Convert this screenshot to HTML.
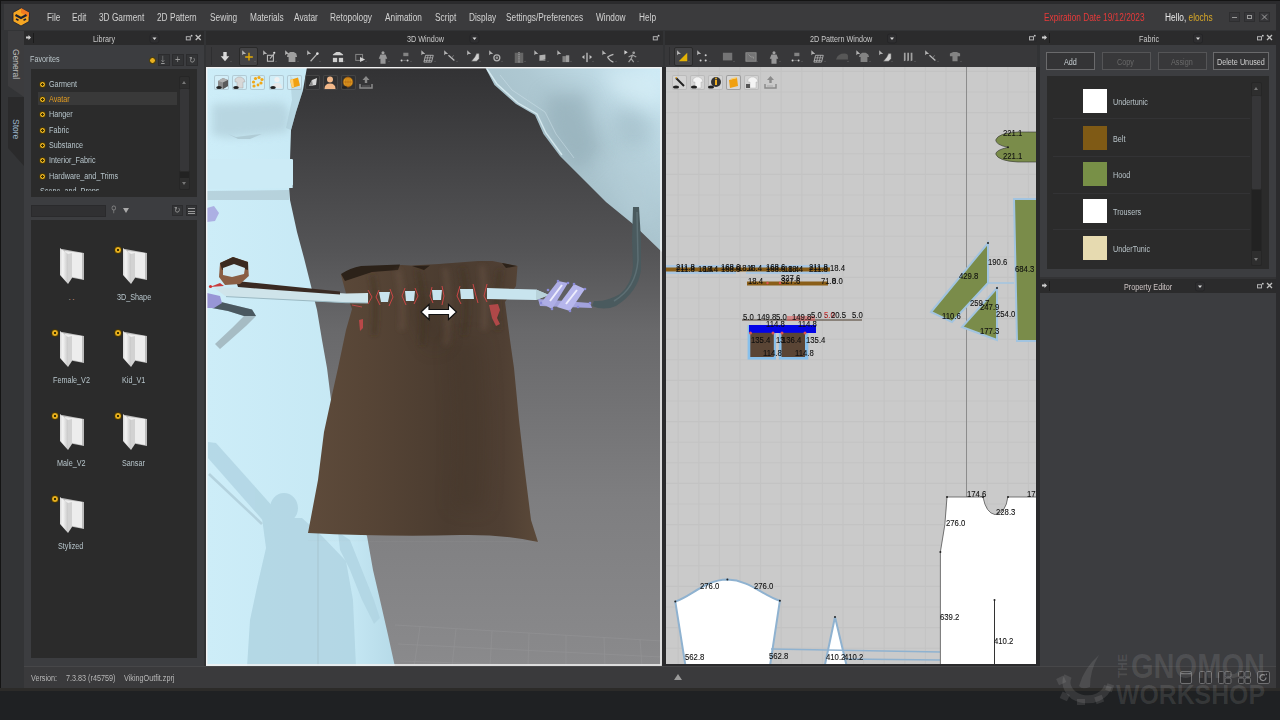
<!DOCTYPE html>
<html><head><meta charset='utf-8'>
<style>
*{margin:0;padding:0;box-sizing:border-box}
html,body{width:1280px;height:720px;overflow:hidden;background:#1e2022;font-family:"Liberation Sans",sans-serif;position:relative}
.a{position:absolute}
.t{position:absolute;white-space:nowrap;font-size:8.5px;color:#c8c8c8;line-height:10px;transform:scaleX(.85);transform-origin:0 0}
.m{position:absolute;white-space:nowrap;font-size:10px;color:#d2d2d2;line-height:12px;top:12px;transform:scaleX(.83);transform-origin:0 0}
.ph{position:absolute;background:#2b2b2c;height:14px}
.ib{position:absolute;width:15px;height:15px;border:1px solid rgba(140,160,170,.45);border-radius:2px;background:rgba(255,255,255,.12)}
.pt{position:absolute;white-space:nowrap;font-size:9px;color:#000;line-height:9px;transform:scaleX(.86);transform-origin:0 0;-webkit-text-stroke:.1px #000}
</style>
</head><body>
<div class="a" style="left:0;top:0;width:1280px;height:691px;background:#323335"></div>
<div class="a" style="left:0;top:0;width:1280px;height:1px;background:#141414"></div>
<div class="a" style="left:0;top:0;width:1px;height:691px;background:#141414"></div>
<div class="a" style="left:1px;top:1px;width:1279px;height:3px;background:#2b2b2d"></div>
<div class="a" style="left:4px;top:4px;width:1272px;height:26px;background:#3b3b3d"></div>
<div class="a" style="left:1276px;top:1px;width:4px;height:690px;background:#2b2b2d"></div>
<!-- logo -->
<svg class="a" style="left:11px;top:7px" width="20" height="20" viewBox="0 0 20 20">
<polygon points="10,1 18,5.5 18,14.5 10,19 2,14.5 2,5.5" fill="#f5a623" stroke="#1a2030" stroke-width="0.8"/>
<polygon points="10,1 18,5.5 18,10 10,6" fill="#f07a20"/>
<polyline points="4.5,8 10,11 15.5,8" fill="none" stroke="#1e2230" stroke-width="2.2"/>
<line x1="5" y1="12" x2="7.5" y2="13.3" stroke="#1e2230" stroke-width="1.6"/>
<line x1="15" y1="12" x2="12.5" y2="13.3" stroke="#1e2230" stroke-width="1.6"/>
</svg>
<div class="m" style="left:47px">File</div>
<div class="m" style="left:72px">Edit</div>
<div class="m" style="left:99px">3D Garment</div>
<div class="m" style="left:156.5px">2D Pattern</div>
<div class="m" style="left:209.5px">Sewing</div>
<div class="m" style="left:249.5px">Materials</div>
<div class="m" style="left:293.5px">Avatar</div>
<div class="m" style="left:330px">Retopology</div>
<div class="m" style="left:385px">Animation</div>
<div class="m" style="left:434.5px">Script</div>
<div class="m" style="left:468.5px">Display</div>
<div class="m" style="left:505.5px">Settings/Preferences</div>
<div class="m" style="left:595.5px">Window</div>
<div class="m" style="left:639px">Help</div>
<div class="m" style="left:1044px;color:#e83a3a">Expiration Date 19/12/2023</div>
<div class="m" style="left:1165px;color:#e8e8e8">Hello, <span style="color:#d9a928">elochs</span></div>
<div class="a" style="left:1229px;top:12px;width:11px;height:10px;background:#37373a;border:1px solid #2e2e30"></div>
<div class="a" style="left:1232px;top:17px;width:5px;height:1px;background:#9a9a9a"></div>
<div class="a" style="left:1244px;top:12px;width:11px;height:10px;background:#37373a;border:1px solid #2e2e30"></div>
<div class="a" style="left:1247px;top:15px;width:5px;height:4px;border:1px solid #9a9a9a"></div>
<div class="a" style="left:1259px;top:12px;width:11px;height:10px;background:#37373a;border:1px solid #2e2e30"></div><svg class="a" style="left:1261px;top:14px" width="7" height="6"><path d="M1 0.5 L6 5.5 M6 0.5 L1 5.5" stroke="#a0a0a0" stroke-width="1"/></svg>
<!-- left tabs -->
<div class="a" style="left:1px;top:30px;width:23px;height:661px;background:#333436"></div>
<svg class="a" style="left:0;top:30px" width="24" height="160"><polygon points="8,1 24,1 24,67 8,56" fill="#3c3c3e"/><polygon points="8,67 24,67 24,136 8,118" fill="#2a2a2b"/></svg>
<div class="a" style="left:12px;top:49px;transform:rotate(90deg);transform-origin:0 0;"><div class="t" style="left:0;top:-9px;position:relative;color:#bcbcbc;transform:none">General</div></div>
<div class="a" style="left:12px;top:119px;transform:rotate(90deg);transform-origin:0 0;"><div class="t" style="left:0;top:-9px;position:relative;color:#9cb6cc;transform:none">Store</div></div>

<div class="a" style="left:24px;top:31px;width:180px;height:636px;background:#3c3d40"></div>
<div class="ph" style="left:24px;top:31px;width:180px;"></div>
<div class="a" style="left:26px;top:35px;width:5px;height:5px;background:#cfcfcf;clip-path:polygon(0 30%,50% 30%,50% 0,100% 50%,50% 100%,50% 70%,0 70%)"></div>
<div class="a" style="left:33px;top:33px;width:1px;height:10px;background:#1c1c1c"></div>
<div class="t" style="left:93px;top:34px;color:#c9c9c9">Library</div>
<!-- favorites -->
<div class="t" style="left:30px;top:54px;color:#b9c4c8">Favorites</div>
<div class="a" style="left:149px;top:57px;width:7px;height:7px;border-radius:50%;background:#e8b020;border:1.5px solid #3a3000"></div>
<div class="a" style="left:158px;top:54px;width:12px;height:12px;background:#333436;border:1px solid #2c2c2e"></div>
<div class="a" style="left:172px;top:54px;width:12px;height:12px;background:#333436;border:1px solid #2c2c2e"></div>
<div class="a" style="left:186px;top:54px;width:12px;height:12px;background:#333436;border:1px solid #2c2c2e"></div>
<div class="t" style="left:161px;top:55px;color:#999;font-size:10px">&#x2913;</div>
<div class="t" style="left:175px;top:54px;color:#999;font-size:11px">+</div>
<div class="t" style="left:189px;top:55px;color:#999;font-size:9px">&#x21bb;</div>
<div class="a" style="left:31px;top:69px;width:166px;height:128px;background:#2b2b2b"></div>
<div class="a" style="left:38px;top:92px;width:139px;height:13px;background:#393939"></div>
<div class="a" style="left:179px;top:76px;width:11px;height:114px;background:#2e2e2e;border:1px solid #262626;border-radius:2px"></div>
<div class="a" style="left:179px;top:88px;width:11px;height:84px;background:#363638;border:1px solid #2a2a2a;border-radius:2px"></div><div class="a" style="left:180px;top:172px;width:9px;height:6px;background:#222"></div>
<div class="a" style="left:182px;top:81px;width:0;height:0;border-left:2.5px solid transparent;border-right:2.5px solid transparent;border-bottom:3px solid #777"></div>
<div class="a" style="left:182px;top:182px;width:0;height:0;border-left:2.5px solid transparent;border-right:2.5px solid transparent;border-top:3px solid #777"></div>
<div class="a" style="left:39px;top:81px;width:7px;height:7px;border-radius:50%;background:radial-gradient(circle,#3a3000 0 1.2px,#e8b020 1.4px);border:1.5px solid #4a3800"></div>
<div class="t" style="left:49px;top:79px;color:#b8c6cc">Garment</div>
<div class="a" style="left:39px;top:96px;width:7px;height:7px;border-radius:50%;background:radial-gradient(circle,#3a3000 0 1.2px,#e8b020 1.4px);border:1.5px solid #4a3800"></div>
<div class="t" style="left:49px;top:94px;color:#e09a20">Avatar</div>
<div class="a" style="left:39px;top:111px;width:7px;height:7px;border-radius:50%;background:radial-gradient(circle,#3a3000 0 1.2px,#e8b020 1.4px);border:1.5px solid #4a3800"></div>
<div class="t" style="left:49px;top:109px;color:#b8c6cc">Hanger</div>
<div class="a" style="left:39px;top:127px;width:7px;height:7px;border-radius:50%;background:radial-gradient(circle,#3a3000 0 1.2px,#e8b020 1.4px);border:1.5px solid #4a3800"></div>
<div class="t" style="left:49px;top:125px;color:#b8c6cc">Fabric</div>
<div class="a" style="left:39px;top:142px;width:7px;height:7px;border-radius:50%;background:radial-gradient(circle,#3a3000 0 1.2px,#e8b020 1.4px);border:1.5px solid #4a3800"></div>
<div class="t" style="left:49px;top:140px;color:#b8c6cc">Substance</div>
<div class="a" style="left:39px;top:157px;width:7px;height:7px;border-radius:50%;background:radial-gradient(circle,#3a3000 0 1.2px,#e8b020 1.4px);border:1.5px solid #4a3800"></div>
<div class="t" style="left:49px;top:155px;color:#b8c6cc">Interior_Fabric</div>
<div class="a" style="left:39px;top:173px;width:7px;height:7px;border-radius:50%;background:radial-gradient(circle,#3a3000 0 1.2px,#e8b020 1.4px);border:1.5px solid #4a3800"></div>
<div class="t" style="left:49px;top:171px;color:#b8c6cc">Hardware_and_Trims</div>
<div class="a" style="left:31px;top:186px;width:140px;height:5px;overflow:hidden"><div class="t" style="left:9px;top:0px;color:#b8c6cc">Scene_and_Props</div></div>
<div class="a" style="left:31px;top:205px;width:75px;height:12px;background:#303032;border:1px solid #2a2a2c"></div>
<div class="t" style="left:111px;top:204px;color:#8a8a8a;font-size:9px">&#x26b2;</div>
<div class="a" style="left:123px;top:208px;width:0;height:0;border-left:3px solid transparent;border-right:3px solid transparent;border-top:5px solid #aaa"></div>
<div class="a" style="left:172px;top:205px;width:11px;height:11px;background:#333436;border:1px solid #2c2c2e"></div>
<div class="a" style="left:186px;top:205px;width:11px;height:11px;background:#333436;border:1px solid #2c2c2e"></div>
<div class="t" style="left:174px;top:205px;color:#999;font-size:9px">&#x21bb;</div>
<div class="a" style="left:188px;top:208px;width:7px;height:6px;border-top:1px solid #999;border-bottom:1px solid #999;background:linear-gradient(#999,#999) 0 2px/7px 1px no-repeat"></div>
<div class="a" style="left:31px;top:220px;width:166px;height:438px;background:#2b2b2b"></div>
<svg class="a" style="left:59px;top:247px" width="26" height="38" viewBox="0 0 26 38">
<defs><linearGradient id="fg" x1="0" x2="1"><stop offset="0" stop-color="#d8d8d8"/><stop offset=".35" stop-color="#f4f4f4"/><stop offset="1" stop-color="#c8c8c8"/></linearGradient></defs>
<polygon points="3,2 25,6 25,33 9,30" fill="#bdbdbd"/>
<polygon points="6,4 23,6 23,32 9,29" fill="#ededed"/>
<polygon points="1,1 9,7 9,37 1,28" fill="url(#fg)"/>
<polygon points="9,7 13,6 13,31 9,37" fill="#d2d2d2"/>
</svg>
<div class="t" style="left:68.5px;top:292px;color:#c09080;letter-spacing:1.5px;transform:none">..</div>
<svg class="a" style="left:122px;top:247px" width="26" height="38" viewBox="0 0 26 38">
<defs><linearGradient id="fg" x1="0" x2="1"><stop offset="0" stop-color="#d8d8d8"/><stop offset=".35" stop-color="#f4f4f4"/><stop offset="1" stop-color="#c8c8c8"/></linearGradient></defs>
<polygon points="3,2 25,6 25,33 9,30" fill="#bdbdbd"/>
<polygon points="6,4 23,6 23,32 9,29" fill="#ededed"/>
<polygon points="1,1 9,7 9,37 1,28" fill="url(#fg)"/>
<polygon points="9,7 13,6 13,31 9,37" fill="#d2d2d2"/>
</svg>
<div class="a" style="left:114px;top:246px;width:8px;height:8px;border-radius:50%;background:radial-gradient(circle,#3a3000 0 1.2px,#e8b020 1.4px);border:1.5px solid #4a3800"></div>
<div class="t" style="left:117.0px;top:292px;color:#b8c6cc">3D_Shape</div>
<svg class="a" style="left:59px;top:330px" width="26" height="38" viewBox="0 0 26 38">
<defs><linearGradient id="fg" x1="0" x2="1"><stop offset="0" stop-color="#d8d8d8"/><stop offset=".35" stop-color="#f4f4f4"/><stop offset="1" stop-color="#c8c8c8"/></linearGradient></defs>
<polygon points="3,2 25,6 25,33 9,30" fill="#bdbdbd"/>
<polygon points="6,4 23,6 23,32 9,29" fill="#ededed"/>
<polygon points="1,1 9,7 9,37 1,28" fill="url(#fg)"/>
<polygon points="9,7 13,6 13,31 9,37" fill="#d2d2d2"/>
</svg>
<div class="a" style="left:51px;top:329px;width:8px;height:8px;border-radius:50%;background:radial-gradient(circle,#3a3000 0 1.2px,#e8b020 1.4px);border:1.5px solid #4a3800"></div>
<div class="t" style="left:52.5px;top:375px;color:#b8c6cc">Female_V2</div>
<svg class="a" style="left:122px;top:330px" width="26" height="38" viewBox="0 0 26 38">
<defs><linearGradient id="fg" x1="0" x2="1"><stop offset="0" stop-color="#d8d8d8"/><stop offset=".35" stop-color="#f4f4f4"/><stop offset="1" stop-color="#c8c8c8"/></linearGradient></defs>
<polygon points="3,2 25,6 25,33 9,30" fill="#bdbdbd"/>
<polygon points="6,4 23,6 23,32 9,29" fill="#ededed"/>
<polygon points="1,1 9,7 9,37 1,28" fill="url(#fg)"/>
<polygon points="9,7 13,6 13,31 9,37" fill="#d2d2d2"/>
</svg>
<div class="a" style="left:114px;top:329px;width:8px;height:8px;border-radius:50%;background:radial-gradient(circle,#3a3000 0 1.2px,#e8b020 1.4px);border:1.5px solid #4a3800"></div>
<div class="t" style="left:122.0px;top:375px;color:#b8c6cc">Kid_V1</div>
<svg class="a" style="left:59px;top:413px" width="26" height="38" viewBox="0 0 26 38">
<defs><linearGradient id="fg" x1="0" x2="1"><stop offset="0" stop-color="#d8d8d8"/><stop offset=".35" stop-color="#f4f4f4"/><stop offset="1" stop-color="#c8c8c8"/></linearGradient></defs>
<polygon points="3,2 25,6 25,33 9,30" fill="#bdbdbd"/>
<polygon points="6,4 23,6 23,32 9,29" fill="#ededed"/>
<polygon points="1,1 9,7 9,37 1,28" fill="url(#fg)"/>
<polygon points="9,7 13,6 13,31 9,37" fill="#d2d2d2"/>
</svg>
<div class="a" style="left:51px;top:412px;width:8px;height:8px;border-radius:50%;background:radial-gradient(circle,#3a3000 0 1.2px,#e8b020 1.4px);border:1.5px solid #4a3800"></div>
<div class="t" style="left:56.5px;top:458px;color:#b8c6cc">Male_V2</div>
<svg class="a" style="left:122px;top:413px" width="26" height="38" viewBox="0 0 26 38">
<defs><linearGradient id="fg" x1="0" x2="1"><stop offset="0" stop-color="#d8d8d8"/><stop offset=".35" stop-color="#f4f4f4"/><stop offset="1" stop-color="#c8c8c8"/></linearGradient></defs>
<polygon points="3,2 25,6 25,33 9,30" fill="#bdbdbd"/>
<polygon points="6,4 23,6 23,32 9,29" fill="#ededed"/>
<polygon points="1,1 9,7 9,37 1,28" fill="url(#fg)"/>
<polygon points="9,7 13,6 13,31 9,37" fill="#d2d2d2"/>
</svg>
<div class="a" style="left:114px;top:412px;width:8px;height:8px;border-radius:50%;background:radial-gradient(circle,#3a3000 0 1.2px,#e8b020 1.4px);border:1.5px solid #4a3800"></div>
<div class="t" style="left:121.5px;top:458px;color:#b8c6cc">Sansar</div>
<svg class="a" style="left:59px;top:496px" width="26" height="38" viewBox="0 0 26 38">
<defs><linearGradient id="fg" x1="0" x2="1"><stop offset="0" stop-color="#d8d8d8"/><stop offset=".35" stop-color="#f4f4f4"/><stop offset="1" stop-color="#c8c8c8"/></linearGradient></defs>
<polygon points="3,2 25,6 25,33 9,30" fill="#bdbdbd"/>
<polygon points="6,4 23,6 23,32 9,29" fill="#ededed"/>
<polygon points="1,1 9,7 9,37 1,28" fill="url(#fg)"/>
<polygon points="9,7 13,6 13,31 9,37" fill="#d2d2d2"/>
</svg>
<div class="a" style="left:51px;top:495px;width:8px;height:8px;border-radius:50%;background:radial-gradient(circle,#3a3000 0 1.2px,#e8b020 1.4px);border:1.5px solid #4a3800"></div>
<div class="t" style="left:58.0px;top:541px;color:#b8c6cc">Stylized</div>

<div class="ph" style="left:206px;top:31px;width:457px;"></div>
<div class="t" style="left:407px;top:34px;color:#c9c9c9">3D Window</div>
<div class="a" style="left:206px;top:45px;width:457px;height:22px;background:#38383a"></div>
<div class="a" style="left:211px;top:47px;width:1px;height:18px;background:#2e2e30"></div>
<div class="a" style="left:239px;top:47px;width:19px;height:19px;background:#444446;border:1px solid #2a2a2a;border-radius:2px"></div>
<svg class="a" style="left:206px;top:67px" width="457" height="600" viewBox="206 67 457 600">
<defs>
<linearGradient id="bg3" x1="0" y1="0" x2="0" y2="1">
<stop offset="0" stop-color="#323234"/><stop offset=".305" stop-color="#545456"/><stop offset=".44" stop-color="#69696b"/><stop offset=".72" stop-color="#7e7e80"/><stop offset="1" stop-color="#8a8a8c"/></linearGradient>
<linearGradient id="fig" x1="0" y1="0" x2="1" y2="0">
<stop offset="0" stop-color="#cdedf8"/><stop offset=".75" stop-color="#c6e8f4"/><stop offset="1" stop-color="#b6dae8"/></linearGradient>
<linearGradient id="slv" x1="1" y1="0" x2="0" y2="1">
<stop offset="0" stop-color="#cdeaf6"/><stop offset=".4" stop-color="#aec8d2"/><stop offset="1" stop-color="#9ab3bc"/></linearGradient>
<linearGradient id="bag" x1="0" y1="0" x2="1" y2="0">
<stop offset="0" stop-color="#5e4b3b"/><stop offset=".25" stop-color="#574536"/><stop offset=".6" stop-color="#4b3c30"/><stop offset=".85" stop-color="#4f3f33"/><stop offset="1" stop-color="#5b4939"/></linearGradient>
<linearGradient id="bagv" x1="0" y1="0" x2="0" y2="1">
<stop offset="0" stop-color="#000" stop-opacity="0"/><stop offset=".8" stop-color="#000" stop-opacity="0"/><stop offset="1" stop-color="#fff" stop-opacity=".06"/></linearGradient>
<filter id="bl2" filterUnits="userSpaceOnUse" x="206" y="67" width="457" height="600"><feGaussianBlur stdDeviation="2.5"/></filter><filter id="bl4" filterUnits="userSpaceOnUse" x="206" y="67" width="457" height="600"><feGaussianBlur stdDeviation="4"/></filter><filter id="bl6" filterUnits="userSpaceOnUse" x="206" y="67" width="457" height="600"><feGaussianBlur stdDeviation="9"/></filter>
<clipPath id="slvclip"><path d="M485 67 L662 67 L662 252 L633 224 L606 202 L587 183 L560 156 L543.5 134 L535 115 L516 104 L494.5 85 Z"/></clipPath>
<clipPath id="figclip"><path d="M206 67 L307 67 L303 90 L296 112 L291 130 L290 160 L293 160 L293 185 L289 186 L290 200 L297 232 L304 258 L310.5 284 L317 310 L322 340 L327 368 L331 400 L334 432 L338 470 L350 505 L367 536 L373 570 L380 600 L388 635 L395 667 L206 667 Z"/></clipPath>
</defs>
<rect x="206" y="67" width="457" height="600" fill="url(#bg3)"/>
<g stroke="#a0a0a2" stroke-width="0.8" fill="none" opacity=".35">
<path d="M395 625 L662 641 M398 644 L662 657 M400 661 L662 670"/>
<path d="M420 627 L414 667 M456 629 L452 667 M492 631 L490 667 M529 633 L528 667 M566 635 L566 667 M604 637 L605 667 M640 639 L642 667"/>
</g>
<!-- right sleeve -->
<path d="M485 67 L662 67 L662 252 L633 224 L606 202 L587 183 L560 156 L543.5 134 L535 115 L516 104 L494.5 85 Z" fill="url(#slv)"/>
<g clip-path="url(#slvclip)"><path d="M545 95 L585 92 L600 150 L575 175 L548 130 Z" fill="#8aa4ae" opacity=".5" filter="url(#bl6)"/><path d="M625 103 L648 118 L655 135 L632 150 L612 128 Z" fill="#8aa4ae" opacity=".3" filter="url(#bl6)"/><path d="M600 160 L640 150 L660 180 L655 230 L625 215 Z" fill="#b8d2dc" opacity=".4" filter="url(#bl6)"/>
<path d="M600 70 L662 70 L662 110 L620 100 Z" fill="#def4fb" opacity=".5" filter="url(#bl6)"/>
</g><path d="M487 69 L497 84 L518 103 L537 114 L546 133 L562 155" stroke="#e2f4fa" stroke-width="1.4" fill="none" opacity=".75"/>
<path d="M500 75 L512 90 L530 102 L545 112 L556 134 L574 158" stroke="#cfe4ec" stroke-width="1" fill="none" opacity=".5"/>
<!-- cord -->
<path d="M633 207 L639 207 L641 240 L641 270 Q638 292 616 306 Q604 311 592 306 L594 301 Q606 302 620 294 Q632 284 633 266 L632 240 Z" fill="#4a5a5e"/>
<path d="M637 212 L638 260 Q636 288 614 301" stroke="#5d6f74" stroke-width="1.5" fill="none"/>
<!-- left figure -->
<path d="M206 67 L307 67 L303 90 L296 112 L291 130 L290 160 L293 160 L293 185 L289 186 L290 200 L297 232 L304 258 L310.5 284 L317 310 L322 340 L327 368 L331 400 L334 432 L338 470 L350 505 L367 536 L373 570 L380 600 L388 635 L395 667 L206 667 Z" fill="url(#fig)"/>
<g clip-path="url(#figclip)"><path d="M212 104 L282 102 L290 112 L288 132 L250 136 L228 138 L212 135 Z" fill="#aecbd6" opacity=".65" filter="url(#bl4)"/></g><path d="M228 134 L236 137 L244 136 L252 135 L262 134 L250 139 L238 139 Z" fill="#b0ccd6"/>
<path d="M290 75 L303 90 L296 112 L291 130 L286 128 L292 100 Z" fill="#a8c6d2" opacity=".5"/>
<path d="M206 159 L292.7 159 L292.7 188 L206 189 Z" fill="#ccebf6"/>
<path d="M206 191 L289 190 L289 200 L206 200 Z" fill="#b2ccd6" opacity=".8"/>
<!-- shadow silhouette -->
<g fill="#b2d6e4" opacity=".9">
<path d="M208 442 L216 443 L274 508 L276 522 L266 524 L208 458 Z"/>
<ellipse cx="284" cy="508" rx="14" ry="15"/>
<path d="M262 518 L302 518 L322 536 L346 561 L353 600 L356 667 L247 667 L250 620 L257 587 L266 548 Z"/>
<path d="M338 532 L350 540 L362 570 L374 600 L380 618 L374 624 L362 600 L350 570 L340 550 Z"/>
</g>
<path d="M209 474 L262 524" stroke="#b4d2de" stroke-width="2.5" fill="none"/>
<path d="M318 532 L318 667" stroke="#a6c4d0" stroke-width="1.2" fill="none" opacity=".8"/>
<polygon points="207,208 214,206 219,213 215,221 207,222" fill="#a9a8e0" opacity=".9"/>
<!-- bag -->
<path d="M341 275 Q350 268 361 267 L402 265 L411 265.5 L439 264 L478 261 L492.5 261 L517.5 266 L516 286 L505 302 L510 340 L514 368 L519 420 L524 464 L531 520 L538 542 Q500 534 460 535 Q390 537 308 533 L318 480 L324 432 L332 395 L338 368 L346 330 L352 309 L345.6 292 Z" fill="url(#bag)"/>
<path d="M341 274 Q350 268 361 266 L400 264.5 L398 270 L372 272 L345 281 Z" fill="#2c2219"/>
<path d="M412 266 L430 265.5 L424 270 Z M502 263 L517 266 L506 268 Z" fill="#2c2219"/>
<g filter="url(#bl2)"><path d="M372 275 Q378 300 374 335 M418 270 Q426 300 422 345 M462 268 Q470 300 464 335 M500 270 Q494 300 498 330" stroke="#3e3026" stroke-width="5" fill="none" opacity=".5"/>
<path d="M398 270 Q404 300 402 330 M445 268 Q450 300 446 345 M482 266 Q486 300 484 330" stroke="#6e5848" stroke-width="6" fill="none" opacity=".4"/>
</g><path d="M465 340 Q475 420 468 510" stroke="#3a2d24" stroke-width="34" fill="none" opacity=".2" filter="url(#bl6)"/><path d="M420 300 Q430 330 440 345" stroke="#3a2d24" stroke-width="20" fill="none" opacity=".35" filter="url(#bl6)"/>
<rect x="308" y="530" width="231" height="12" fill="url(#bagv)"/>
<!-- strap -->
<path d="M213.6 287.4 L252 288 L346 293.5 L368 293 L368 303 L346 302.7 L226 296.6 Z" fill="#cfe4ea"/>
<path d="M226 296.6 L346 302.7 L368 303" stroke="#9ab8c2" stroke-width="1" fill="none"/>
<g fill="#c8e4ee">
<path d="M379 292 L390 292 L388 302 L381 302 Z"/>
<path d="M405 291 L415 291 L414 301 L406 301 Z"/>
<path d="M432 290 L442 290 L441 300 L433 300 Z"/>
<path d="M460 289 L473 289 L474 299 L461 299 Z"/>
<path d="M487 288 L536 289.5 L549 295 L536 300 L487 299 Z"/>
</g>
<path d="M536 289.5 L549 295 L536 300 Z" fill="#b8d2da"/>
<g stroke="#cc4646" stroke-width="1" fill="none">
<path d="M368 290 L372 297 L368 304 M379 290 L376 297 L380 305 M390 289 L393 297 L389 306 M405 288 L402 296 L406 305 M415 288 L418 296 L414 304 M432 287 L430 296 L433 303 M442 286 L444 296 L442 305 M460 286 L457 296 L461 304 M473 284 L476 296 L478 303 M487 284 L484 296 L487 302"/>
</g>
<path d="M489 305 L498 304 L500 310 L497 318 L500 324 L496 326 L492 318 Z" fill="#b04848"/>
<path d="M359 320 L363 319 L363 328 L360 331 Z" fill="#b84848"/>
<path d="M352 305 L362 307" stroke="#b84848" stroke-width="1"/>
<path d="M236 281 L276 285 L340 291.5 L340 294.5 L276 290 L238 287 Z" fill="#3a2a22"/>
<!-- buckle -->
<path d="M538 299 L590 303 L592 308 L540 306 Z" fill="#a2a2dc"/>
<path d="M541 303 L558 281 L568 283 L552 309 Z" fill="#aeaee6"/>
<path d="M557 307 L574 284 L585 289 L570 311 Z" fill="#b6b6ec"/>
<path d="M550 301 L562 285 M566 304 L577 290" stroke="#ececfc" stroke-width="2"/>
<g fill="#8a8ad8"><circle cx="541" cy="303" r="1.3"/><circle cx="558" cy="281" r="1.3"/><circle cx="568" cy="283" r="1.3"/><circle cx="552" cy="309" r="1.3"/><circle cx="574" cy="284" r="1.3"/><circle cx="585" cy="289" r="1.3"/><circle cx="570" cy="311" r="1.3"/><circle cx="590" cy="303" r="1.3"/><circle cx="578" cy="307" r="1.3"/><circle cx="548" cy="290" r="1.3"/></g>
<!-- belt loop left -->
<path d="M220 263 L233 257 L248 262 L248.8 276 L240 284 L225 285 L219 277 Z" fill="#8a5e44"/>
<path d="M220 263 L233 257 L248 262 L248 270 L234 266 L222 270 Z" fill="#3a2a20"/>
<path d="M223 268 L234 264 L245 268 L244 274 L232 277 L223 275 Z" fill="#d0eaf3"/>
<path d="M210 287 L220 283 L224 286 Z" fill="#c83c3c"/>
<circle cx="210.5" cy="286.5" r="1.6" fill="#d43030"/>
<!-- ribbon -->
<path d="M221 302 L252 309.6 L256 316 L246 326 L228 342 L220 349 L215 344 L232 328 L244 316 L228 311 L212 308 Z" fill="#a6bcc4"/>
<path d="M221 302 L252 309.6 L256 316 L244 316 L228 311 L212 308 Z" fill="#4a5860"/>
<polygon points="207,293 220,296 222,303 214,308 207,308" fill="#9896d6"/>
<!-- cursor double arrow -->
<path d="M421 312 L429 304.5 L429 309.5 L448.5 309.5 L448.5 304.5 L456.5 312 L448.5 319.5 L448.5 314.5 L429 314.5 L429 319.5 Z" fill="#fff" stroke="#111" stroke-width="1.2" stroke-linejoin="miter"/>
<rect x="206.6" y="67.6" width="454.4" height="597.4" fill="none" stroke="#f2f2f2" stroke-width="1.6"/>
</svg>
<div class="ib" style="left:214px;top:75px;background:rgba(255,255,255,.15)"></div>
<div class="ib" style="left:232px;top:75px;background:rgba(255,255,255,.15)"></div>
<div class="ib" style="left:250px;top:75px;background:rgba(255,255,255,.15)"></div>
<div class="ib" style="left:269px;top:75px;background:rgba(255,255,255,.15)"></div>
<div class="ib" style="left:287px;top:75px;background:rgba(255,255,255,.15)"></div>
<div class="ib" style="left:305px;top:75px;background:rgba(40,40,40,.3);border-color:rgba(90,90,90,.5)"></div>
<div class="ib" style="left:323px;top:75px;background:rgba(40,40,40,.3);border-color:rgba(90,90,90,.5)"></div>
<div class="ib" style="left:341px;top:75px;background:rgba(40,40,40,.3);border-color:rgba(90,90,90,.5)"></div>
<svg class="a" style="left:206px;top:70px" width="180" height="25" viewBox="206 70 180 25">
<path d="M218 81 l5 -3 l5 2 v6 l-5 3 l-5 -2 Z" fill="#8a8a8a"/><path d="M218 81 l5 -3 l5 2 l-5 2.5 Z" fill="#b0b0b0"/><path d="M223 82.5 l5 -2.5 v6 l-5 3 Z" fill="#5a5a5a"/><ellipse cx="219" cy="87.5" rx="2.8" ry="1.5" fill="#222"/>
<path d="M235 79 l3 -2 h3 l3 2 l1 3 h-2 v6 h-6 v-6 h-2 Z" fill="#d8d8d8" stroke="#999" stroke-width=".4"/><ellipse cx="236" cy="87.5" rx="2.8" ry="1.5" fill="#222"/>
<g fill="#f0a818"><circle cx="254" cy="86" r="1.6"/><circle cx="253.5" cy="82" r="1.6"/><circle cx="255.5" cy="78.5" r="1.6"/><circle cx="259" cy="77.5" r="1.6"/><circle cx="262" cy="79.5" r="1.6"/><circle cx="261" cy="83" r="1.6"/><circle cx="258" cy="85" r="1.4"/></g>
<circle cx="277" cy="79.5" r="2.6" fill="#f0f0f0"/><path d="M272 88 q0 -5 5 -5 q5 0 5 5 Z" fill="#e8e8e8"/><ellipse cx="273" cy="87.5" rx="2.8" ry="1.5" fill="#222"/>
<path d="M290 80 l8 -2.5 l2 8 l-8 2.5 Z" fill="#f0a010"/><path d="M290 80 l3 -1 l1 8 l-2 0.5 Z" fill="#ffd070"/>
<path d="M309 86 l3 -6 l5 -2 l-1 7 Z" fill="#d8d8d8"/><path d="M309 86 l3 -6 l1 6 Z" fill="#8a8a8a"/>
<circle cx="330" cy="79.5" r="3" fill="#f2b88a"/><path d="M324.5 89 q0 -5.5 5.5 -5.5 q5.5 0 5.5 5.5 Z" fill="#f2b88a"/>
<circle cx="348" cy="82" r="5" fill="#e09a20" stroke="#6a4010" stroke-width=".6"/><path d="M343 82 h10 M348 77 v10" stroke="#a86010" stroke-width=".6"/><ellipse cx="348" cy="82" rx="2.2" ry="5" fill="none" stroke="#a86010" stroke-width=".6"/><ellipse cx="344.5" cy="87.5" rx="2.5" ry="1.3" fill="#222"/>
<path d="M360 84 v4 h12 v-4" stroke="#8a8a8a" stroke-width="1.5" fill="none"/><path d="M362.5 86 h7" stroke="#8a8a8a" stroke-width="1" stroke-dasharray="1 1"/><path d="M366 76 l-3.5 4 h2.3 v3 h2.4 v-3 h2.3 Z" fill="#8a8a8a"/>
</svg>

<div class="ph" style="left:665px;top:31px;width:375px;"></div>
<div class="t" style="left:810px;top:34px;color:#c9c9c9">2D Pattern Window</div>
<div class="a" style="left:665px;top:45px;width:372px;height:22px;background:#38383a"></div>
<div class="a" style="left:669px;top:47px;width:1px;height:18px;background:#2e2e30"></div>
<div class="a" style="left:674px;top:47px;width:19px;height:19px;background:#444446;border:1px solid #2a2a2a;border-radius:2px"></div>
<svg class="a" style="left:665px;top:67px" width="372" height="598" viewBox="665 67 372 598">
<rect x="665" y="67" width="372" height="598" fill="#cacaca"/>
<g stroke="#c3c3c3" stroke-width="1.1"><line x1="678.2" y1="67" x2="678.2" y2="665"/><line x1="698.8" y1="67" x2="698.8" y2="665"/><line x1="719.4" y1="67" x2="719.4" y2="665"/><line x1="740.0" y1="67" x2="740.0" y2="665"/><line x1="760.6" y1="67" x2="760.6" y2="665"/><line x1="781.2" y1="67" x2="781.2" y2="665"/><line x1="801.8" y1="67" x2="801.8" y2="665"/><line x1="822.4" y1="67" x2="822.4" y2="665"/><line x1="843.0" y1="67" x2="843.0" y2="665"/><line x1="863.6" y1="67" x2="863.6" y2="665"/><line x1="884.2" y1="67" x2="884.2" y2="665"/><line x1="904.8" y1="67" x2="904.8" y2="665"/><line x1="925.4" y1="67" x2="925.4" y2="665"/><line x1="946.0" y1="67" x2="946.0" y2="665"/><line x1="966.6" y1="67" x2="966.6" y2="665"/><line x1="987.2" y1="67" x2="987.2" y2="665"/><line x1="1007.8" y1="67" x2="1007.8" y2="665"/><line x1="1028.4" y1="67" x2="1028.4" y2="665"/><line x1="665" y1="71.4" x2="1037" y2="71.4"/><line x1="665" y1="92.0" x2="1037" y2="92.0"/><line x1="665" y1="112.6" x2="1037" y2="112.6"/><line x1="665" y1="133.2" x2="1037" y2="133.2"/><line x1="665" y1="153.8" x2="1037" y2="153.8"/><line x1="665" y1="174.4" x2="1037" y2="174.4"/><line x1="665" y1="195.0" x2="1037" y2="195.0"/><line x1="665" y1="215.6" x2="1037" y2="215.6"/><line x1="665" y1="236.2" x2="1037" y2="236.2"/><line x1="665" y1="256.8" x2="1037" y2="256.8"/><line x1="665" y1="277.4" x2="1037" y2="277.4"/><line x1="665" y1="298.0" x2="1037" y2="298.0"/><line x1="665" y1="318.6" x2="1037" y2="318.6"/><line x1="665" y1="339.2" x2="1037" y2="339.2"/><line x1="665" y1="359.8" x2="1037" y2="359.8"/><line x1="665" y1="380.4" x2="1037" y2="380.4"/><line x1="665" y1="401.0" x2="1037" y2="401.0"/><line x1="665" y1="421.6" x2="1037" y2="421.6"/><line x1="665" y1="442.2" x2="1037" y2="442.2"/><line x1="665" y1="462.8" x2="1037" y2="462.8"/><line x1="665" y1="483.4" x2="1037" y2="483.4"/><line x1="665" y1="504.0" x2="1037" y2="504.0"/><line x1="665" y1="524.6" x2="1037" y2="524.6"/><line x1="665" y1="545.2" x2="1037" y2="545.2"/><line x1="665" y1="565.8" x2="1037" y2="565.8"/><line x1="665" y1="586.4" x2="1037" y2="586.4"/><line x1="665" y1="607.0" x2="1037" y2="607.0"/><line x1="665" y1="627.6" x2="1037" y2="627.6"/><line x1="665" y1="648.2" x2="1037" y2="648.2"/></g>
<line x1="966.5" y1="67" x2="966.5" y2="497" stroke="#8c8c8c" stroke-width="1"/>

<rect x="665" y="265" width="71" height="9" fill="#a8c6e2"/><rect x="746" y="265" width="84" height="9" fill="#a8c6e2"/>
<rect x="665" y="267.5" width="165" height="4" fill="#8a5e18"/>
<rect x="747" y="281.5" width="81" height="4" fill="#8a5e18"/>
<g fill="#e05050"><circle cx="767.5" cy="283" r="1.2"/><circle cx="780" cy="283" r="1.2"/></g>
<line x1="742" y1="320" x2="862" y2="320" stroke="#4a3a2a" stroke-width="1"/>
<rect x="787" y="316" width="28" height="5" fill="#e05858" opacity=".55"/>
<rect x="749" y="325" width="67" height="8" fill="#0404e6"/>
<rect x="747.6" y="325" width="28.4" height="34.6" fill="#88c0ec"/><rect x="778.8" y="325" width="29.5" height="34.6" fill="#88c0ec"/>
<rect x="749" y="325" width="67" height="8" fill="#0404e6"/>
<rect x="750.3" y="332.8" width="23.5" height="24.2" fill="#5a4535"/><rect x="781.5" y="332.8" width="23.5" height="24.2" fill="#5a4535"/>
<g fill="#e05050"><circle cx="750.5" cy="333" r="1.5"/><circle cx="773" cy="333" r="1.5"/><circle cx="782" cy="333" r="1.5"/><circle cx="805" cy="333" r="1.5"/></g>
<g fill="#7a8c4a" stroke="#a2c4e0" stroke-width="2"><path d="M1014 199 L1037 199 L1037 341 L1017 341 Z"/><path d="M988 243 L988 283 L952 322 L931 312 Z"/><path d="M997 288 L997 340 L962 327 Z"/></g>
<line x1="988" y1="283" x2="1014" y2="283" stroke="#a2c4e0" stroke-width="1.5"/>
<path d="M1037 132 L1018 132 Q998 133 995.7 140 Q996 145 1008 147.3 Q996 150 995.7 154 Q998 161 1018 162 L1037 162 Z" fill="#7a8c4a" stroke="#333" stroke-width=".6"/>
<g fill="#ffffff" stroke="#8fb2d0" stroke-width="2"><path d="M675.3 601.6 C692 596 705 580 727.4 579.6 C750 580 763 596 779.9 600.7 L770 666 L685.5 666 Z"/><path d="M835 617 L846.7 666 L824.7 666 Z"/></g>
<path d="M771 649 L940 652 M846 659 L940 660" stroke="#8fb2d0" stroke-width="1.5" fill="none"/>
<path d="M947 497 L983 497 Q986 513 995 514.6 Q1006 513 1007.8 497 L1037 497 L1037 666 L940.4 666 L940.4 551.8 Q946 525 947 497 Z" fill="#ffffff" stroke="#555" stroke-width=".8"/>
<line x1="994.5" y1="600" x2="994.5" y2="666" stroke="#333" stroke-width="1"/>
<g fill="#222"><circle cx="947" cy="497" r="1"/><circle cx="983" cy="497" r="1"/><circle cx="1008" cy="497" r="1"/><circle cx="940.4" cy="552" r="1"/><circle cx="994.5" cy="600" r="1"/><circle cx="727.4" cy="579.6" r="1"/><circle cx="675.3" cy="601.6" r="1"/><circle cx="779.9" cy="600.7" r="1"/><circle cx="835" cy="617" r="1"/><circle cx="988" cy="243" r="1"/><circle cx="997" cy="288" r="1"/><circle cx="1008" cy="147.3" r="1"/></g>
</svg>
<div class="pt" style="left:676px;top:263px;color:#111">211.8</div>
<div class="pt" style="left:676px;top:265px;color:#111">211.8</div>
<div class="pt" style="left:698px;top:265px;color:#111">18.4</div>
<div class="pt" style="left:703px;top:265px;color:#111">18.4</div>
<div class="pt" style="left:721px;top:263px;color:#111">168.6</div>
<div class="pt" style="left:721px;top:265px;color:#111">168.6</div>
<div class="pt" style="left:738px;top:264px;color:#111">18.4</div>
<div class="pt" style="left:747px;top:264px;color:#111">18.4</div>
<div class="pt" style="left:766px;top:263px;color:#111">168.6</div>
<div class="pt" style="left:766px;top:265px;color:#111">168.6</div>
<div class="pt" style="left:784px;top:265px;color:#111">18.4</div>
<div class="pt" style="left:788px;top:265px;color:#111">18.4</div>
<div class="pt" style="left:808.5px;top:263px;color:#111">211.8</div>
<div class="pt" style="left:808.5px;top:265px;color:#111">211.8</div>
<div class="pt" style="left:830px;top:264px;color:#111">18.4</div>
<div class="pt" style="left:748px;top:277px;color:#111">18.4</div>
<div class="pt" style="left:781px;top:274px;color:#111">327.6</div>
<div class="pt" style="left:781px;top:277px;color:#111">327.6</div>
<div class="pt" style="left:821px;top:277px;color:#111">71.8</div>
<div class="pt" style="left:832px;top:277px;color:#111">0.0</div>
<div class="pt" style="left:743px;top:313px;color:#111">5.0</div>
<div class="pt" style="left:757px;top:313px;color:#111">149.8</div>
<div class="pt" style="left:776px;top:313px;color:#111">5.0</div>
<div class="pt" style="left:792px;top:313px;color:#111">149.8</div>
<div class="pt" style="left:811px;top:311px;color:#111">5.0</div>
<div class="pt" style="left:824px;top:311px;color:#e03030">5.0</div>
<div class="pt" style="left:831px;top:311px;color:#111">20.5</div>
<div class="pt" style="left:852px;top:311px;color:#111">5.0</div>
<div class="pt" style="left:766px;top:320px;color:#111">114.8</div>
<div class="pt" style="left:798px;top:320px;color:#111">114.8</div>
<div class="pt" style="left:751px;top:336px;color:#111">135.4</div>
<div class="pt" style="left:776px;top:336px;color:#111">13</div>
<div class="pt" style="left:782px;top:336px;color:#111">136.4</div>
<div class="pt" style="left:806px;top:336px;color:#111">135.4</div>
<div class="pt" style="left:763px;top:349px;color:#111">114.8</div>
<div class="pt" style="left:795px;top:349px;color:#111">114.8</div>
<div class="pt" style="left:1002.6px;top:129px;color:#111">221.1</div>
<div class="pt" style="left:1002.6px;top:152px;color:#111">221.1</div>
<div class="pt" style="left:988px;top:258px;color:#111">190.6</div>
<div class="pt" style="left:1015px;top:265px;color:#111">684.3</div>
<div class="pt" style="left:959px;top:272px;color:#111">429.8</div>
<div class="pt" style="left:970px;top:299px;color:#111">259.7</div>
<div class="pt" style="left:980px;top:303px;color:#111">247.9</div>
<div class="pt" style="left:996px;top:310px;color:#111">254.0</div>
<div class="pt" style="left:942px;top:312px;color:#111">110.6</div>
<div class="pt" style="left:980px;top:327px;color:#111">177.3</div>
<div class="pt" style="left:967px;top:490px;color:#111">174.6</div>
<div class="pt" style="left:1027px;top:490px;color:#111">17</div>
<div class="pt" style="left:996px;top:508px;color:#111">228.3</div>
<div class="pt" style="left:946px;top:519px;color:#111">276.0</div>
<div class="pt" style="left:700px;top:582px;color:#111">276.0</div>
<div class="pt" style="left:754px;top:582px;color:#111">276.0</div>
<div class="pt" style="left:940px;top:613px;color:#111">639.2</div>
<div class="pt" style="left:994px;top:637px;color:#111">410.2</div>
<div class="pt" style="left:685px;top:653px;color:#111">562.8</div>
<div class="pt" style="left:769px;top:652px;color:#111">562.8</div>
<div class="pt" style="left:826px;top:653px;color:#111">410.2</div>
<div class="pt" style="left:844px;top:653px;color:#111">410.2</div>
<div class="a" style="left:1036px;top:67px;width:4px;height:600px;background:#2a2a2c"></div>
<div class="a" style="left:662px;top:67px;width:4px;height:600px;background:#2a2a2c"></div>
<div class="ib" style="left:672px;top:75px;border-color:rgba(170,170,170,.6);background:rgba(255,255,255,.2)"></div>
<div class="ib" style="left:690px;top:75px;border-color:rgba(170,170,170,.6);background:rgba(255,255,255,.2)"></div>
<div class="ib" style="left:708px;top:75px;border-color:rgba(170,170,170,.6);background:rgba(255,255,255,.2)"></div>
<div class="ib" style="left:726px;top:75px;border-color:rgba(120,120,120,.6);background:rgba(255,255,255,.25)"></div>
<div class="ib" style="left:744px;top:75px;border-color:rgba(170,170,170,.6);background:rgba(255,255,255,.2)"></div>
<svg class="a" style="left:665px;top:70px" width="120" height="25" viewBox="665 70 120 25">
<path d="M676 78 L684 86" stroke="#222" stroke-width="2"/><path d="M675 77 l2 0 l0 2 Z" fill="#e0a020"/>
<ellipse cx="676" cy="87" rx="3" ry="1.6" fill="#222"/>
<path d="M693 79 l3 -2 h3 l3 2 l1 3 h-2 v6 h-6 v-6 h-2 Z" fill="#f4f4f4" stroke="#aaa" stroke-width=".4"/><ellipse cx="694" cy="87" rx="3" ry="1.6" fill="#222"/>
<circle cx="716" cy="82" r="5" fill="#333"/><rect x="715" y="80" width="2" height="5" fill="#f0b020"/><circle cx="716" cy="78.6" r="1" fill="#f0b020"/><ellipse cx="711" cy="87" rx="3" ry="1.6" fill="#222"/>
<path d="M729 80 l8 -2 l1 8 l-8 2 Z" fill="#f0a010"/><path d="M731 79 l6 -1.5" stroke="#ffd060" stroke-width="1"/>
<path d="M748 79 l3 -2 h3 l3 2 l1 3 h-2 v6 h-6 v-6 h-2 Z" fill="#f4f4f4" stroke="#aaa" stroke-width=".4"/><rect x="746" y="84" width="4" height="4" fill="#555"/>
<path d="M765 84 v4 h11 v-4" stroke="#8a8a8a" stroke-width="1.5" fill="none"/><path d="M767.5 86 h6" stroke="#8a8a8a" stroke-width="1" stroke-dasharray="1 1"/><path d="M770.5 76 l-3.5 4 h2.3 v3 h2.4 v-3 h2.3 Z" fill="#8a8a8a"/>
</svg>
<div class="a" style="left:666px;top:664px;width:374px;height:2px;background:#2a2a2c"></div>

<div class="ph" style="left:1040px;top:31px;width:236px;"></div>
<div class="a" style="left:1042px;top:35px;width:5px;height:5px;background:#cfcfcf;clip-path:polygon(0 30%,50% 30%,50% 0,100% 50%,50% 100%,50% 70%,0 70%)"></div>
<div class="a" style="left:1049px;top:33px;width:1px;height:10px;background:#1c1c1c"></div>
<div class="t" style="left:1139px;top:34px;color:#c9c9c9">Fabric</div>
<div class="a" style="left:1040px;top:45px;width:236px;height:233px;background:#3c3d40"></div>
<div class="a" style="left:1046px;top:52px;width:49px;height:18px;border:1px solid #6a6a6c;background:#343436"></div>
<div class="a" style="left:1102px;top:52px;width:49px;height:18px;border:1px solid #555557;background:#38383a"></div>
<div class="a" style="left:1158px;top:52px;width:49px;height:18px;border:1px solid #555557;background:#38383a"></div>
<div class="a" style="left:1213px;top:52px;width:56px;height:18px;border:1px solid #6a6a6c;background:#343436"></div>
<div class="t" style="left:1064px;top:57px;color:#c8d0d4">Add</div>
<div class="t" style="left:1117px;top:57px;color:#6a6a6a">Copy</div>
<div class="t" style="left:1171px;top:57px;color:#6a6a6a">Assign</div>
<div class="t" style="left:1217px;top:57px;color:#d0d0d0">Delete Unused</div>
<div class="a" style="left:1047px;top:76px;width:222px;height:193px;background:#2b2b2b"></div>
<div class="a" style="left:1083px;top:89px;width:24px;height:24px;background:#ffffff"></div>
<div class="t" style="left:1113px;top:97px;color:#b9c4c9">Undertunic</div>
<div class="a" style="left:1083px;top:126px;width:24px;height:24px;background:#7f5a15"></div>
<div class="t" style="left:1113px;top:134px;color:#b9c4c9">Belt</div>
<div class="a" style="left:1083px;top:162px;width:24px;height:24px;background:#789047"></div>
<div class="t" style="left:1113px;top:170px;color:#b9c4c9">Hood</div>
<div class="a" style="left:1083px;top:199px;width:24px;height:24px;background:#ffffff"></div>
<div class="t" style="left:1113px;top:207px;color:#b9c4c9">Trousers</div>
<div class="a" style="left:1083px;top:236px;width:24px;height:24px;background:#e6dab0"></div>
<div class="t" style="left:1113px;top:244px;color:#b9c4c9">UnderTunic</div>
<div class="a" style="left:1053px;top:118px;width:197px;height:1px;background:#333335"></div>
<div class="a" style="left:1053px;top:156px;width:197px;height:1px;background:#333335"></div>
<div class="a" style="left:1053px;top:193px;width:197px;height:1px;background:#333335"></div>
<div class="a" style="left:1053px;top:229px;width:197px;height:1px;background:#333335"></div>
<div class="a" style="left:1251px;top:82px;width:11px;height:184px;background:#2e2e2e;border:1px solid #262626;border-radius:2px"></div>
<div class="a" style="left:1251px;top:95px;width:11px;height:95px;background:#363638;border:1px solid #2a2a2a;border-radius:2px"></div>
<div class="a" style="left:1252px;top:190px;width:9px;height:61px;background:#222"></div>
<div class="a" style="left:1254px;top:87px;width:0;height:0;border-left:2.5px solid transparent;border-right:2.5px solid transparent;border-bottom:3px solid #777"></div>
<div class="a" style="left:1254px;top:258px;width:0;height:0;border-left:2.5px solid transparent;border-right:2.5px solid transparent;border-top:3px solid #777"></div>
<div class="a" style="left:1040px;top:277px;width:236px;height:2px;background:#333335"></div>
<div class="ph" style="left:1040px;top:279px;width:236px;"></div>
<div class="a" style="left:1042px;top:283px;width:5px;height:5px;background:#cfcfcf;clip-path:polygon(0 30%,50% 30%,50% 0,100% 50%,50% 100%,50% 70%,0 70%)"></div>
<div class="a" style="left:1049px;top:281px;width:1px;height:10px;background:#1c1c1c"></div>
<div class="t" style="left:1124px;top:282px;color:#cfc6c6">Property Editor</div>
<div class="a" style="left:1040px;top:293px;width:236px;height:374px;background:#3c3d40"></div>

<div class="a" style="left:24px;top:666px;width:1252px;height:22px;background:#3a3a3c;border-top:1px solid #474749"></div>
<div class="t" style="left:31px;top:673px;color:#b8b8b8">Version:</div>
<div class="t" style="left:66px;top:673px;color:#b8b8b8">7.3.83 (r45759)</div>
<div class="t" style="left:124px;top:673px;color:#b8b8b8">VikingOutfit.zprj</div>
<div class="a" style="left:674px;top:674px;width:0;height:0;border-left:4px solid transparent;border-right:4px solid transparent;border-bottom:6px solid #9a9a9a"></div>
<div class="a" style="left:0;top:688px;width:1280px;height:3px;background:#2c2b29"></div>
<div class="a" style="left:0;top:691px;width:1280px;height:29px;background:#1f2123"></div>
<svg class="a" style="left:1178px;top:669px" width="95" height="17" viewBox="1178 669 95 17">
<g stroke="#707072" stroke-width="1" fill="#2e2e30">
<rect x="1180.5" y="671.5" width="11" height="12" rx="1.5"/><rect x="1199.5" y="671.5" width="5.5" height="12" rx="1.2"/><rect x="1206" y="671.5" width="5.5" height="12" rx="1.2"/>
<rect x="1218.5" y="671.5" width="5.5" height="12" rx="1.2"/><rect x="1225" y="671.5" width="6" height="5.5" rx="1.2"/><rect x="1225" y="678" width="6" height="5.5" rx="1.2"/>
<rect x="1238.5" y="671.5" width="5.5" height="5.5" rx="1.2"/><rect x="1245" y="671.5" width="5.5" height="5.5" rx="1.2"/><rect x="1238.5" y="678" width="5.5" height="5.5" rx="1.2"/><rect x="1245" y="678" width="5.5" height="5.5" rx="1.2"/>
<rect x="1257.5" y="671.5" width="12" height="12" rx="1.5"/>
</g>
<path d="M1181 673.5 h10" stroke="#707072" stroke-width="1.5"/>
<path d="M1266 677.5 a3 3 0 1 1 -1 -2.2" stroke="#8a8a8c" stroke-width="1.2" fill="none"/><path d="M1265.5 674 l1.5 -0.5 l0 2 Z" fill="#8a8a8c"/>
</svg>

<svg class="a" style="left:0;top:0" width="1280" height="70"><g opacity=".92"><g transform="translate(225 57) scale(0.85) translate(-225 -57)"><path d="M220 56 h3 v-5 h4 v5 h3 l-5 6 Z" fill="#e8e8e8"/><path d="M231 63 l1.5 -1.5 v1.5 Z" fill="#777"/></g><g transform="translate(249 57) scale(0.85) translate(-249 -57)"><path d="M241 49 l0 6 l1.6 -1.6 l3 0 Z" fill="#bdbdbd"/><path d="M249 52 v9 M244.5 57 h9" stroke="#f0b400" stroke-width="1.6"/><path d="M255 63 l1.5 -1.5 v1.5 Z" fill="#777"/></g><g transform="translate(270 57) scale(0.85) translate(-270 -57)"><path d="M262 49 l0 6 l1.6 -1.6 l3 0 Z" fill="#bdbdbd"/><rect x="267" y="55" width="7" height="7" fill="none" stroke="#c4c4c4" stroke-width="1.3"/><path d="M270 59 l5 -6" stroke="#c4c4c4" stroke-width="1.2"/><circle cx="275" cy="52" r="1.3" fill="#eee"/><path d="M276 63 l1.5 -1.5 v1.5 Z" fill="#777"/></g><g transform="translate(292 57) scale(0.85) translate(-292 -57)"><path d="M284 49 l0 6 l1.6 -1.6 l3 0 Z" fill="#bdbdbd"/><path d="M287 53 l3 -2 h4 l3 2 l1 4 l-2 0 v6 h-8 v-6 l-2 0 Z" fill="#a8a8a8"/><path d="M298 63 l1.5 -1.5 v1.5 Z" fill="#777"/></g><g transform="translate(314 57) scale(0.85) translate(-314 -57)"><path d="M306 49 l0 6 l1.6 -1.6 l3 0 Z" fill="#bdbdbd"/><path d="M310 62 l8 -9" stroke="#c4c4c4" stroke-width="1.4"/><circle cx="318" cy="53" r="1.5" fill="#eee"/><path d="M320 63 l1.5 -1.5 v1.5 Z" fill="#777"/></g><g transform="translate(338 57) scale(0.85) translate(-338 -57)"><path d="M332 54 l4 -3 h2 v4 h-6 Z M344 54 l-4 -3 h-2 v4 h6 Z" fill="#ddd"/><rect x="332" y="58" width="5" height="5" fill="#ddd"/><rect x="339" y="58" width="5" height="5" fill="#ddd"/><path d="M344 63 l1.5 -1.5 v1.5 Z" fill="#777"/></g><g transform="translate(360 57) scale(0.85) translate(-360 -57)"><rect x="355" y="54" width="8" height="7" fill="none" stroke="#8a8a8a" stroke-width="1.2"/><path d="M360 57 l6 3 l-6 3 Z" fill="#ddd"/><path d="M366 63 l1.5 -1.5 v1.5 Z" fill="#777"/></g><g transform="translate(383 57) scale(0.85) translate(-383 -57)"><circle cx="383" cy="52" r="1.8" fill="#aaa"/><path d="M380 54 h6 l2 5 h-2 l0 6 h-6 l0 -6 h-2 Z" fill="#a0a0a0"/><path d="M389 63 l1.5 -1.5 v1.5 Z" fill="#777"/></g><g transform="translate(405 57) scale(0.85) translate(-405 -57)"><path d="M403 52 h6 v4 h-6 Z" fill="#8a8a8a"/><circle cx="401" cy="61" r="1.2" fill="#ddd"/><circle cx="408" cy="61" r="1.2" fill="#ddd"/><path d="M403 61 h3" stroke="#8a8a8a" stroke-width=".8"/><path d="M411 63 l1.5 -1.5 v1.5 Z" fill="#777"/></g><g transform="translate(429 57) scale(0.85) translate(-429 -57)"><path d="M420 49 l0 6 l1.6 -1.6 l3 0 Z" fill="#bdbdbd"/><path d="M425 55 h9 l-2 8 h-9 Z" fill="none" stroke="#c4c4c4" stroke-width="1"/><path d="M428 55 l-2 8 M431 55 l-2 8 M424 58 h9 M423 61 h9" stroke="#c4c4c4" stroke-width=".8"/><path d="M435 63 l1.5 -1.5 v1.5 Z" fill="#777"/></g><g transform="translate(451 57) scale(0.85) translate(-451 -57)"><path d="M443 49 l0 6 l1.6 -1.6 l3 0 Z" fill="#bdbdbd"/><path d="M448 55 l7 6" stroke="#c4c4c4" stroke-width="1.6"/><path d="M452 58 l2 -3" stroke="#8a8a8a" stroke-width="1"/><path d="M457 63 l1.5 -1.5 v1.5 Z" fill="#777"/></g><g transform="translate(474 57) scale(0.85) translate(-474 -57)"><path d="M466 49 l0 6 l1.6 -1.6 l3 0 Z" fill="#bdbdbd"/><path d="M471 62 l4 -5 l2 -4 h3 v6 l-3 3 Z" fill="#ddd" stroke="#555" stroke-width=".6"/><path d="M480 63 l1.5 -1.5 v1.5 Z" fill="#777"/></g><g transform="translate(496 57) scale(0.85) translate(-496 -57)"><path d="M488 49 l0 6 l1.6 -1.6 l3 0 Z" fill="#bdbdbd"/><circle cx="497" cy="58" r="3.5" fill="none" stroke="#bbb" stroke-width="1.5"/><circle cx="497" cy="58" r="1.5" fill="#999"/><path d="M502 63 l1.5 -1.5 v1.5 Z" fill="#777"/></g><g transform="translate(519 57) scale(0.85) translate(-519 -57)"><rect x="514" y="52" width="10" height="12" fill="#6a6a6a"/><path d="M519 51 v13" stroke="#aaa" stroke-width="1.5" stroke-dasharray="1.5 1"/><path d="M525 63 l1.5 -1.5 v1.5 Z" fill="#777"/></g><g transform="translate(542 57) scale(0.85) translate(-542 -57)"><path d="M533 49 l0 6 l1.6 -1.6 l3 0 Z" fill="#bdbdbd"/><path d="M539 55 l7 -1 v6 l-7 1 Z" fill="#bbb"/><path d="M539 61 h7" stroke="#999" stroke-width="1"/><path d="M548 63 l1.5 -1.5 v1.5 Z" fill="#777"/></g><g transform="translate(565 57) scale(0.85) translate(-565 -57)"><path d="M556 49 l0 6 l1.6 -1.6 l3 0 Z" fill="#bdbdbd"/><rect x="562" y="56" width="4" height="7" fill="#8a8a8a"/><rect x="566" y="55" width="4" height="8" fill="#a8a8a8"/><path d="M571 63 l1.5 -1.5 v1.5 Z" fill="#777"/></g><g transform="translate(587 57) scale(0.85) translate(-587 -57)"><path d="M581 57 l3 -2.5 v5 Z M593 57 l-3 -2.5 v5 Z" fill="#ccc"/><rect x="586" y="52" width="2" height="11" fill="#aaa"/><path d="M593 63 l1.5 -1.5 v1.5 Z" fill="#777"/></g><g transform="translate(610 57) scale(0.85) translate(-610 -57)"><path d="M601 49 l0 6 l1.6 -1.6 l3 0 Z" fill="#bdbdbd"/><path d="M607 57 q4 -2 7 -3 M607 57 q3 5 7 6" stroke="#c4c4c4" stroke-width="1.5" fill="none"/><path d="M616 63 l1.5 -1.5 v1.5 Z" fill="#777"/></g><g transform="translate(632 57) scale(0.85) translate(-632 -57)"><path d="M623 49 l0 5 l4 -2.5 Z" fill="#ddd"/><circle cx="634" cy="52" r="1.6" fill="#aaa"/><path d="M633 54 l-2 5 l-3 4 M631 59 l3 4 M633 55 l4 2 M632 55 l-4 2" stroke="#a8a8a8" stroke-width="1.4" fill="none"/><path d="M638 63 l1.5 -1.5 v1.5 Z" fill="#777"/></g><g transform="translate(683 57) scale(0.85) translate(-683 -57)"><path d="M676 49 l0 6 l1.6 -1.6 l3 0 Z" fill="#bdbdbd"/><path d="M688 52 v10 h-10 Z" fill="#f2bc00"/><path d="M689 63 l1.5 -1.5 v1.5 Z" fill="#777"/></g><g transform="translate(704 57) scale(0.85) translate(-704 -57)"><path d="M696 49 l0 6 l1.6 -1.6 l3 0 Z" fill="#bdbdbd"/><circle cx="706" cy="55" r="1.2" fill="#ddd"/><circle cx="700" cy="61" r="1.2" fill="#ddd"/><circle cx="706" cy="61" r="1.2" fill="#ddd"/><path d="M710 63 l1.5 -1.5 v1.5 Z" fill="#777"/></g><g transform="translate(728 57) scale(0.85) translate(-728 -57)"><rect x="722" y="52" width="11" height="9" fill="#7a7a7a"/><path d="M734 63 l1.5 -1.5 v1.5 Z" fill="#777"/></g><g transform="translate(751 57) scale(0.85) translate(-751 -57)"><rect x="745" y="52" width="12" height="10" fill="#7a7a7a" stroke="#999" stroke-width="1"/><path d="M748 54 l3 3 h3 v2" stroke="#aaa" fill="none" stroke-width=".8"/><path d="M757 63 l1.5 -1.5 v1.5 Z" fill="#777"/></g><g transform="translate(774 57) scale(0.85) translate(-774 -57)"><circle cx="774" cy="52" r="1.8" fill="#aaa"/><path d="M771 54 h6 l2 5 h-2 l0 6 h-6 l0 -6 h-2 Z" fill="#a0a0a0"/><path d="M780 63 l1.5 -1.5 v1.5 Z" fill="#777"/></g><g transform="translate(796 57) scale(0.85) translate(-796 -57)"><path d="M794 52 h6 v4 h-6 Z" fill="#8a8a8a"/><circle cx="792" cy="61" r="1.2" fill="#ddd"/><circle cx="799" cy="61" r="1.2" fill="#ddd"/><path d="M794 61 h3" stroke="#8a8a8a" stroke-width=".8"/><path d="M802 63 l1.5 -1.5 v1.5 Z" fill="#777"/></g><g transform="translate(819 57) scale(0.85) translate(-819 -57)"><path d="M810 49 l0 6 l1.6 -1.6 l3 0 Z" fill="#bdbdbd"/><path d="M815 55 h9 l-2 8 h-9 Z" fill="none" stroke="#c4c4c4" stroke-width="1"/><path d="M818 55 l-2 8 M821 55 l-2 8 M814 58 h9 M813 61 h9" stroke="#c4c4c4" stroke-width=".8"/><path d="M825 63 l1.5 -1.5 v1.5 Z" fill="#777"/></g><g transform="translate(842 57) scale(0.85) translate(-842 -57)"><path d="M835 60 q2 -7 10 -7 q4 0 4 3 v4 Z" fill="#5a5a5a"/><path d="M848 63 l1.5 -1.5 v1.5 Z" fill="#777"/></g><g transform="translate(864 57) scale(0.85) translate(-864 -57)"><path d="M855 49 l0 6 l1.6 -1.6 l3 0 Z" fill="#bdbdbd"/><path d="M859 54 l3 -2 h4 l3 2 l1 3 l-2 0 v6 h-8 v-6 l-2 0 Z" fill="#8a8a8a"/><path d="M870 63 l1.5 -1.5 v1.5 Z" fill="#777"/></g><g transform="translate(886 57) scale(0.85) translate(-886 -57)"><path d="M878 49 l0 6 l1.6 -1.6 l3 0 Z" fill="#bdbdbd"/><path d="M883 62 l4 -5 l2 -4 h3 v6 l-3 3 Z" fill="#ddd" stroke="#555" stroke-width=".6"/><path d="M892 63 l1.5 -1.5 v1.5 Z" fill="#777"/></g><g transform="translate(909 57) scale(0.85) translate(-909 -57)"><path d="M903 52 l2 0 v9 l-2 1 Z M907 52 l2 0 v9 l-2 1 Z M911 52 l2 0 v9 l-2 1 Z" fill="#aaa"/><path d="M915 63 l1.5 -1.5 v1.5 Z" fill="#777"/></g><g transform="translate(932 57) scale(0.85) translate(-932 -57)"><path d="M924 49 l0 6 l1.6 -1.6 l3 0 Z" fill="#bdbdbd"/><path d="M929 55 l7 6" stroke="#c4c4c4" stroke-width="1.6"/><path d="M933 58 l2 -3" stroke="#8a8a8a" stroke-width="1"/><path d="M938 63 l1.5 -1.5 v1.5 Z" fill="#777"/></g><g transform="translate(955 57) scale(0.85) translate(-955 -57)"><path d="M949 53 l4 -2 h4 l4 2 l0 3 l-3 0 v6 h-6 v-6 l-3 0 Z" fill="#8a8a8a"/><path d="M961 63 l1.5 -1.5 v1.5 Z" fill="#777"/></g></g></svg>

<svg class="a" style="left:0;top:0" width="1280" height="300"><rect x="150.0" y="34.0" width="9" height="9" rx="2" fill="#2e2e30" stroke="#252527"/><path d="M152.5 37.5 h4 l-2 2.5 Z" fill="#d8d8d8"/><rect x="185.3" y="34.2" width="8" height="7" rx="1" fill="#2e2e30" stroke="#29292b"/><rect x="186.3" y="36.7" width="4" height="3.2" fill="none" stroke="#b0b0b0" stroke-width="1"/><circle cx="191.60000000000002" cy="35.7" r=".9" fill="#c8c8c8"/><path d="M195.7 35 l5 5 M200.7 35 l-5 5" stroke="#c0c0c0" stroke-width="1.3"/><rect x="470.0" y="34.0" width="9" height="9" rx="2" fill="#2e2e30" stroke="#252527"/><path d="M472.5 37.5 h4 l-2 2.5 Z" fill="#d8d8d8"/><rect x="652.3" y="34.2" width="8" height="7" rx="1" fill="#2e2e30" stroke="#29292b"/><rect x="653.3" y="36.7" width="4" height="3.2" fill="none" stroke="#b0b0b0" stroke-width="1"/><circle cx="658.5999999999999" cy="35.7" r=".9" fill="#c8c8c8"/><rect x="887.5" y="34.0" width="9" height="9" rx="2" fill="#2e2e30" stroke="#252527"/><path d="M890 37.5 h4 l-2 2.5 Z" fill="#d8d8d8"/><rect x="1028.5" y="34.2" width="8" height="7" rx="1" fill="#2e2e30" stroke="#29292b"/><rect x="1029.5" y="36.7" width="4" height="3.2" fill="none" stroke="#b0b0b0" stroke-width="1"/><circle cx="1034.8" cy="35.7" r=".9" fill="#c8c8c8"/><rect x="1193.5" y="34.0" width="9" height="9" rx="2" fill="#2e2e30" stroke="#252527"/><path d="M1196 37.5 h4 l-2 2.5 Z" fill="#d8d8d8"/><rect x="1256.5" y="34.2" width="8" height="7" rx="1" fill="#2e2e30" stroke="#29292b"/><rect x="1257.5" y="36.7" width="4" height="3.2" fill="none" stroke="#b0b0b0" stroke-width="1"/><circle cx="1262.8" cy="35.7" r=".9" fill="#c8c8c8"/><path d="M1267 35 l5 5 M1272 35 l-5 5" stroke="#c0c0c0" stroke-width="1.3"/><rect x="1195.5" y="282.0" width="9" height="9" rx="2" fill="#2e2e30" stroke="#252527"/><path d="M1198 285.5 h4 l-2 2.5 Z" fill="#d8d8d8"/><rect x="1256.5" y="282.2" width="8" height="7" rx="1" fill="#2e2e30" stroke="#29292b"/><rect x="1257.5" y="284.7" width="4" height="3.2" fill="none" stroke="#b0b0b0" stroke-width="1"/><circle cx="1262.8" cy="283.7" r=".9" fill="#c8c8c8"/><path d="M1267 283 l5 5 M1272 283 l-5 5" stroke="#c0c0c0" stroke-width="1.3"/></svg>

<svg class="a" style="left:1050px;top:645px" width="230" height="65" viewBox="1050 645 230 65">
<g fill="none" stroke="rgba(205,205,205,.13)" stroke-width="8">
<path d="M1068 676 A21 17 0 1 0 1108 686"/>
</g>
<g fill="rgba(205,205,205,.13)">
<path d="M1099 655 Q1084 668 1079 686 Q1082 690 1090 687 Q1090 670 1099 655 Z"/>
<rect x="1057" y="677" width="8" height="7" transform="rotate(-25 1061 680)"/>
<rect x="1061" y="693" width="8" height="7" transform="rotate(25 1065 696)"/>
<rect x="1077" y="699" width="8" height="6"/>
<rect x="1095" y="696" width="8" height="7" transform="rotate(-20 1099 699)"/>
<rect x="1106" y="684" width="7" height="7" transform="rotate(20 1109 688)"/>
</g>
<g fill="rgba(210,210,210,.13)" font-family="Liberation Sans">
<text x="0" y="0" font-size="12" font-weight="bold" transform="translate(1127 678) rotate(-90)" textLength="24" lengthAdjust="spacingAndGlyphs">THE</text>
<text x="1131" y="678" font-size="30" font-weight="bold" textLength="134" lengthAdjust="spacingAndGlyphs" transform="translate(0 -128.8) scale(1 1.19)">GNOMON</text>
<text x="1116" y="704" font-size="28" font-weight="bold" textLength="149" lengthAdjust="spacingAndGlyphs">WORKSHOP</text>
</g>
</svg>

</body></html>
